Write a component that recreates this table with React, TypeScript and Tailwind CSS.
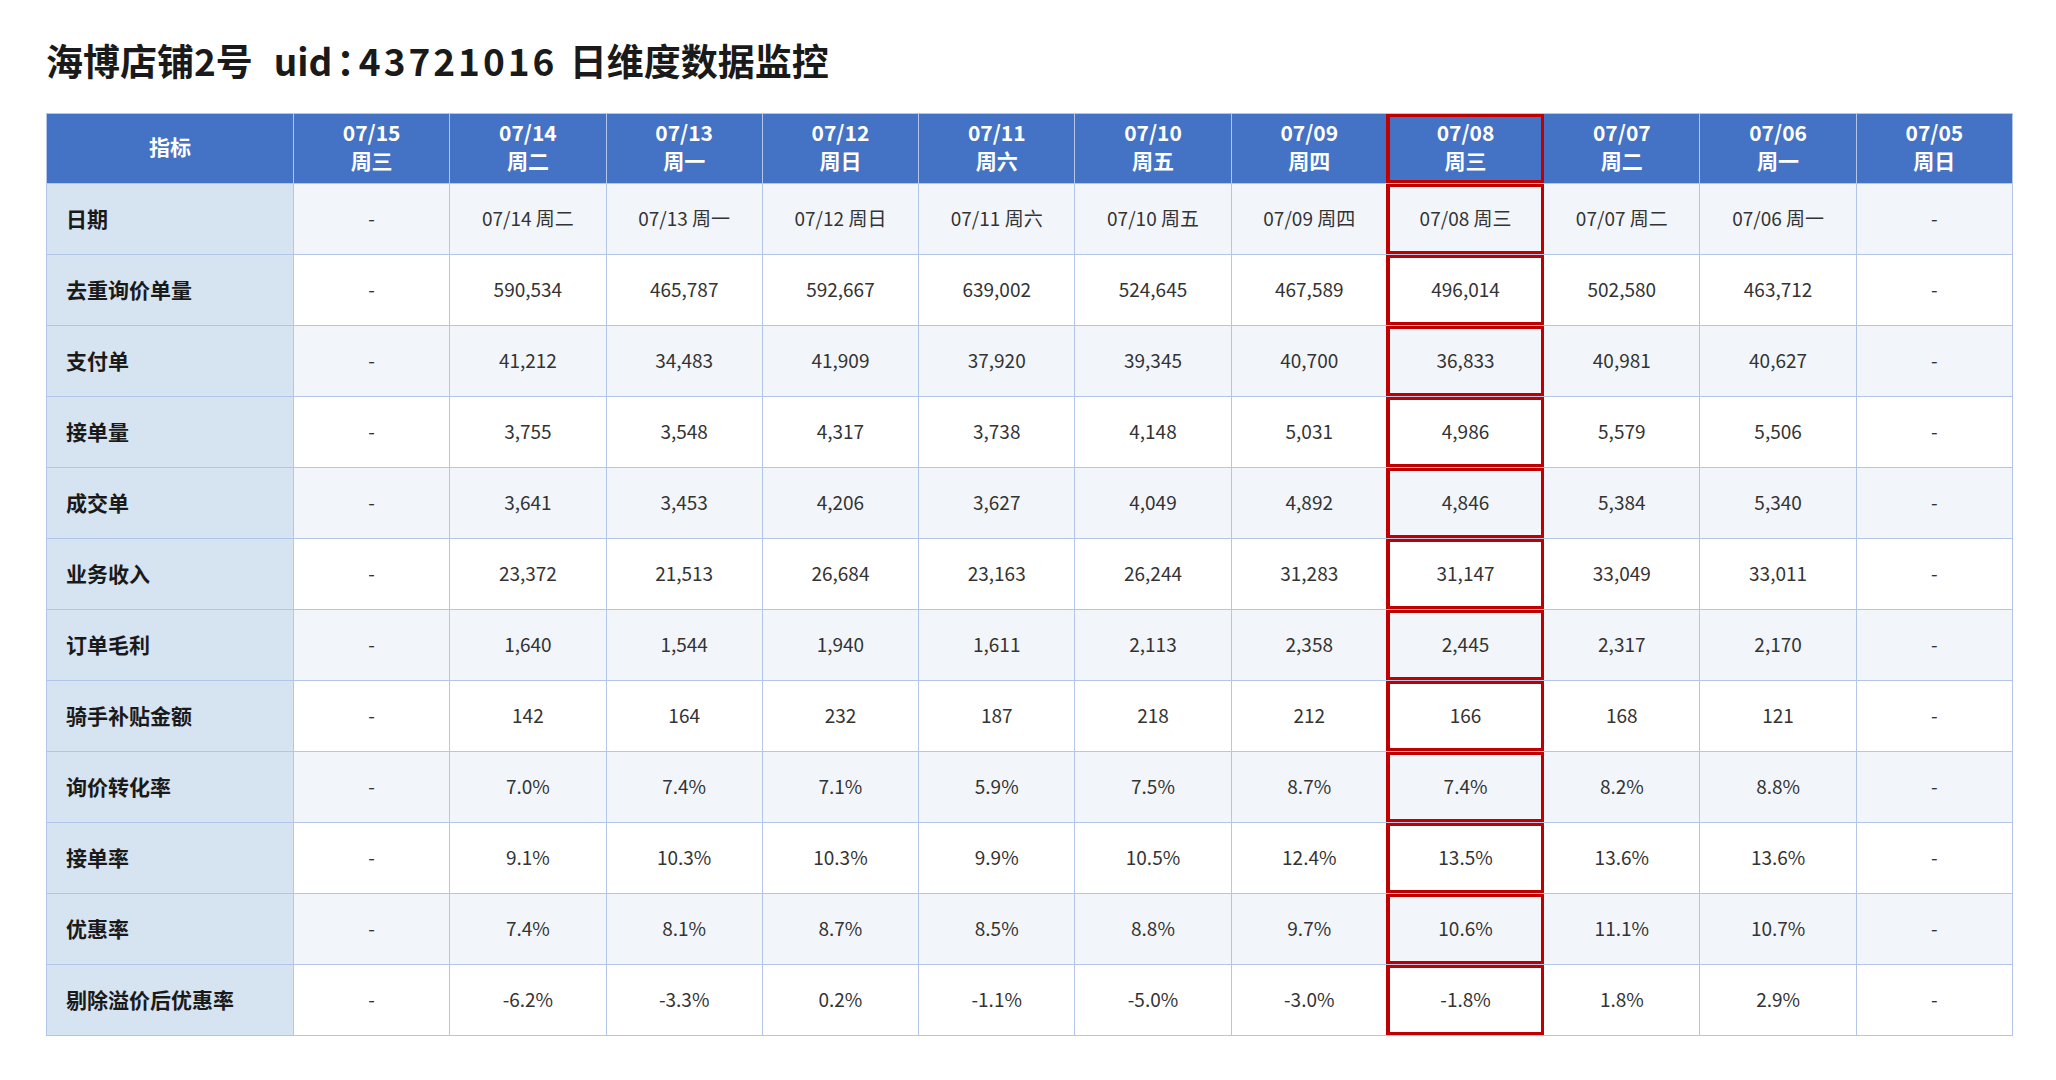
import React from "react";

const headers: [string, string][] = [
  ["07/15", "周三"],
  ["07/14", "周二"],
  ["07/13", "周一"],
  ["07/12", "周日"],
  ["07/11", "周六"],
  ["07/10", "周五"],
  ["07/09", "周四"],
  ["07/08", "周三"],
  ["07/07", "周二"],
  ["07/06", "周一"],
  ["07/05", "周日"],
];

const rows: [string, string[]][] = [
  ["日期", ["-", "07/14 周二", "07/13 周一", "07/12 周日", "07/11 周六", "07/10 周五", "07/09 周四", "07/08 周三", "07/07 周二", "07/06 周一", "-"]],
  ["去重询价单量", ["-", "590,534", "465,787", "592,667", "639,002", "524,645", "467,589", "496,014", "502,580", "463,712", "-"]],
  ["支付单", ["-", "41,212", "34,483", "41,909", "37,920", "39,345", "40,700", "36,833", "40,981", "40,627", "-"]],
  ["接单量", ["-", "3,755", "3,548", "4,317", "3,738", "4,148", "5,031", "4,986", "5,579", "5,506", "-"]],
  ["成交单", ["-", "3,641", "3,453", "4,206", "3,627", "4,049", "4,892", "4,846", "5,384", "5,340", "-"]],
  ["业务收入", ["-", "23,372", "21,513", "26,684", "23,163", "26,244", "31,283", "31,147", "33,049", "33,011", "-"]],
  ["订单毛利", ["-", "1,640", "1,544", "1,940", "1,611", "2,113", "2,358", "2,445", "2,317", "2,170", "-"]],
  ["骑手补贴金额", ["-", "142", "164", "232", "187", "218", "212", "166", "168", "121", "-"]],
  ["询价转化率", ["-", "7.0%", "7.4%", "7.1%", "5.9%", "7.5%", "8.7%", "7.4%", "8.2%", "8.8%", "-"]],
  ["接单率", ["-", "9.1%", "10.3%", "10.3%", "9.9%", "10.5%", "12.4%", "13.5%", "13.6%", "13.6%", "-"]],
  ["优惠率", ["-", "7.4%", "8.1%", "8.7%", "8.5%", "8.8%", "9.7%", "10.6%", "11.1%", "10.7%", "-"]],
  ["剔除溢价后优惠率", ["-", "-6.2%", "-3.3%", "0.2%", "-1.1%", "-5.0%", "-3.0%", "-1.8%", "1.8%", "2.9%", "-"]],
];

const HL = 7;

function Highlight() {
  return (
    <div className="pointer-events-none absolute -left-[2px] -right-px inset-y-0 z-10 border-l-[4px] border-r-[3px] border-y-[3px] border-[#c00000]" />
  );
}

export default function App() {
  return (
    <div className="min-h-screen bg-white pl-[46px] pt-[37px] font-['Noto_Sans_CJK_SC','Microsoft_YaHei',sans-serif]">
      <h1 className="whitespace-pre text-[37px] font-bold leading-[47px] text-[#1a1a1a]">
        <span className="mr-[4px]">海博店铺2号</span>  uid
        <span className="mx-[4px] [font-feature-settings:'halt']">：</span>
        <span className="mr-[4px] tracking-[3px]">43721016</span> 日维度数据监控
      </h1>
      <div className="mt-[29px] grid w-[1967px] grid-cols-[247px_repeat(11,minmax(0,1fr))] border-l border-t border-[#b4c6e7]">
        <div className="flex h-[70px] items-center justify-center border-b border-r border-[#b4c6e7] bg-[#4472c4] pb-[4px] text-[21px] font-bold text-white">
          指标
        </div>
        {headers.map(([d, w], i) => (
          <div
            key={d}
            className="relative flex h-[70px] flex-col items-center justify-center border-b border-r border-[#b4c6e7] bg-[#4472c4] pb-[6px] text-[21px] font-bold leading-[28px] text-white"
          >
            <span>{d}</span>
            <span>{w}</span>
            {i === HL && <Highlight />}
          </div>
        ))}
        {rows.map(([label, vals], r) => {
          const bg = r % 2 === 0 ? "bg-[#f2f6fb]" : "bg-white";
          return (
            <React.Fragment key={label}>
              <div className="flex h-[71px] items-center border-b border-r border-[#b4c6e7] bg-[#d6e3f0] pb-[1px] pl-[19px] text-[21px] font-bold text-[#1a1a1a]">
                {label}
              </div>
              {vals.map((v, i) => (
                <div
                  key={i}
                  className={
                    "relative flex h-[71px] items-center justify-center border-b border-r border-[#b4c6e7] pb-[1px] text-[19px] text-[#333333] " +
                    bg
                  }
                >
                  {v}
                  {i === HL && <Highlight />}
                </div>
              ))}
            </React.Fragment>
          );
        })}
      </div>
    </div>
  );
}
